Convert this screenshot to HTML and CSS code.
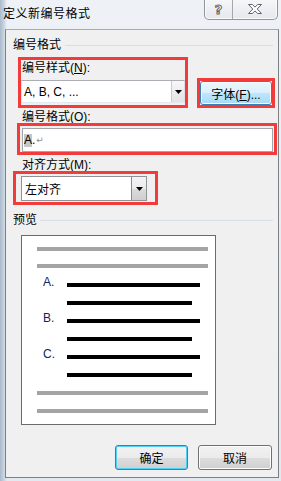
FILE: index.html
```html
<!DOCTYPE html>
<html>
  <head>
    <meta charset="utf-8">
    <link rel="stylesheet" href="styles.css">
  </head>
  <body>
    <div class="titlebar">
      <span class="title">定义新编号格式</span>
      <div class="caption-buttons">
        <div class="cap-btn cap-help"><span>?</span></div>
        <div class="cap-btn cap-close">
          <svg width="14" height="10" viewBox="0 0 14 10">
            <path d="M0.5,0.5 H4.3 L7,3.1 L9.7,0.5 H13.5 L9.2,5 L13.5,9.5 H9.7 L7,6.9 L4.3,9.5 H0.5 L4.8,5 Z" fill="#fff" stroke="#5f646a" stroke-width="1"/>
          </svg>
        </div>
      </div>
    </div>

    <div class="client">
      <div class="group-head">
        <span>编号格式</span>
        <i class="rule"></i>
      </div>

      <div class="row-style">
        <div class="mark mark-style">
          <label class="field-label">编号样式(<u>N</u>):</label>
          <div class="combo combo-style">
            <span class="combo-text">A, B, C, ...</span>
            <span class="combo-drop">
              <svg width="7" height="4" viewBox="0 0 7 4"><path d="M0,0 H7 L3.5,4 Z" fill="#000"/></svg>
            </span>
          </div>
        </div>
        <div class="mark mark-font">
          <button type="button" class="btn btn-hot">字体(<u>F</u>)...</button>
        </div>
      </div>

      <label class="field-label label-format">编号格式(O):</label>
      <div class="mark mark-format">
        <div class="textbox"><span class="sel">A</span>.<span class="para">↵</span></div>
      </div>

      <label class="field-label label-align">对齐方式(M):</label>
      <div class="mark mark-align">
        <div class="combo combo-align">
          <span class="combo-text">左对齐</span>
          <span class="combo-drop drop-btn">
            <svg width="7" height="4" viewBox="0 0 7 4"><path d="M0,0 H7 L3.5,4 Z" fill="#000"/></svg>
          </span>
        </div>
      </div>

      <div class="group-head head-preview">
        <span>预览</span>
        <i class="rule"></i>
      </div>

      <div class="preview">
        <div class="gray"></div>
        <div class="gray gray-second"></div>
        <div class="items">
          <div class="item"><span class="num">A.</span><i class="bar"></i></div>
          <div class="item"><span class="num"></span><i class="bar short"></i></div>
          <div class="item"><span class="num">B.</span><i class="bar"></i></div>
          <div class="item"><span class="num"></span><i class="bar short"></i></div>
          <div class="item"><span class="num">C.</span><i class="bar"></i></div>
          <div class="item"><span class="num"></span><i class="bar short"></i></div>
        </div>
        <div class="gray gray-after"></div>
        <div class="gray gray-after"></div>
      </div>

      <div class="actions">
        <button type="button" class="btn btn-default btn-ok">确定</button>
        <button type="button" class="btn btn-cancel">取消</button>
      </div>
    </div>
  </body>
</html>
```

FILE: styles.css
```css
body {
  margin: 0;
  width: 281px;
  height: 481px;
  overflow: hidden;
  font-family: "Liberation Sans", "Noto Sans CJK SC", sans-serif;
  font-size: 12px;
  color: #000;
  background:
    linear-gradient(to right, #a9bacb 0, #c9d5e1 4px, rgba(233, 238, 244, 0) 7px),
    linear-gradient(#eef1f5, #e2e8ef);
}

/* title bar */
.titlebar {
  display: flex;
  align-items: flex-start;
  height: 29px;
}

.title {
  margin: 7px 0 0 3px;
  line-height: 14px;
  letter-spacing: 0.5px;
}

.caption-buttons {
  display: flex;
  margin-left: auto;
  margin-right: 3px;
  margin-top: -1px;
  height: 20px;
  border: 1px solid #8e949b;
  border-top: none;
  border-radius: 0 0 5px 5px;
  overflow: hidden;
  background: linear-gradient(#f6f7f9, #e4e8ed);
  box-shadow: inset 0 0 0 1px rgba(255, 255, 255, 0.8);
}

.cap-btn {
  display: flex;
  align-items: center;
  justify-content: center;
}

.cap-help {
  width: 27px;
  border-right: 1px solid #a3a8ae;
}

.cap-help span {
  font-family: "DejaVu Sans", sans-serif;
  font-weight: bold;
  font-size: 13px;
  line-height: 13px;
  color: #fff;
  -webkit-text-stroke: 1px #5f646a;
}

.cap-close {
  width: 44px;
}

/* client area */
.client {
  display: flex;
  flex-direction: column;
  box-sizing: border-box;
  height: 449px;
  margin: 0 2px 0 5px;
  border: 1px solid #7b8085;
  border-top-color: #a6abb0;
  background: #f0f0f0;
}

.group-head {
  display: flex;
  align-items: center;
  margin: 9px 5px 0 7px;
  line-height: 12px;
}

.rule {
  flex: 1;
  height: 1px;
  margin-left: 4px;
  background: #d5dfe5;
}

.head-preview .rule {
  margin-left: 3px;
}

.field-label {
  display: block;
  line-height: 12px;
}

.mark {
  box-sizing: border-box;
  border: 3px solid #f23c3c;
}

.row-style {
  display: flex;
  align-items: flex-end;
  gap: 9px;
  margin: 6px 0 0 12px;
}

.mark-style {
  width: 170px;
  padding: 2px 0;
}

.mark-style .field-label {
  padding-left: 1px;
}

.mark-font {
  width: 78px;
  height: 30px;
}

.combo {
  display: flex;
  box-sizing: border-box;
  border: 1px solid #abadb3;
  border-left-color: #e2e3ea;
  border-right-color: #dbdfe6;
  border-bottom-color: #e3e9ef;
  background: #fff;
}

.combo-style {
  height: 23px;
  margin-top: 6px;
}

.combo-text {
  flex: 1;
  display: flex;
  align-items: center;
  padding-left: 2px;
}

.combo-drop {
  display: flex;
  align-items: center;
  justify-content: center;
  width: 12px;
  border-left: 1px solid #c9cbd0;
  background: linear-gradient(#f7f7f7, #e3e3e3);
}

.label-format {
  margin: 3px 0 0 16px;
}

.mark-format {
  width: 260px;
  height: 32px;
  margin-left: 11px;
  padding: 2px 0 0 2px;
}

.textbox {
  display: flex;
  align-items: center;
  box-sizing: border-box;
  width: 251px;
  height: 24px;
  padding-left: 1px;
  border: 1px solid #a3a5ab;
  background: #fff;
}

.sel {
  line-height: 13px;
  background: #c6c6c6;
}

.para {
  margin-left: 1px;
  font-family: "DejaVu Sans", sans-serif;
  font-size: 9px;
  color: #8e8e8e;
}

.label-align {
  margin: 4px 0 0 16px;
}

.mark-align {
  width: 145px;
  height: 34px;
  margin-left: 7px;
  padding: 2px 0 0 5px;
}

.combo-align {
  width: 126px;
  height: 25px;
  border-color: #8f9297;
}

.combo-align .combo-text {
  padding-left: 3px;
}

.drop-btn {
  width: 14px;
  margin: 0;
  border-left: 1px solid #8a8a8a;
  background: linear-gradient(#f4f4f4 0%, #ebebeb 50%, #dcdcdc 51%, #cfcfcf 100%);
}

/* preview */
.preview {
  box-sizing: border-box;
  width: 195px;
  height: 190px;
  margin: 9px 0 0 15px;
  padding-top: 11px;
  border: 1px solid #6b6b6b;
  background: #fff;
}

.gray {
  width: 171px;
  height: 4px;
  margin-left: 15px;
  background: #a4a4a4;
}

.gray-second {
  margin-top: 13px;
}

.gray-after {
  margin-top: 14px;
}

.items {
  margin-top: 1px;
}

.item {
  display: flex;
  align-items: flex-end;
  height: 18px;
}

.num {
  width: 24px;
  margin-left: 21px;
  margin-bottom: -1px;
  line-height: 12px;
  color: #0f2560;
}

.bar {
  width: 133px;
  height: 4px;
  background: #000;
}

.bar.short {
  width: 125px;
}

/* buttons */
.btn {
  box-sizing: border-box;
  height: 25px;
  padding: 0;
  font-family: inherit;
  font-size: 12px;
  color: #000;
  border: 1px solid #707070;
  border-radius: 3px;
  background: linear-gradient(#f2f2f2 0%, #ebebeb 50%, #dddddd 51%, #cfcfcf 100%);
  box-shadow: inset 0 0 0 1px #fcfcfc;
}

.btn-hot {
  width: 100%;
  height: 100%;
  border-color: #3c7fb1;
  background: linear-gradient(#eaf6fd 0%, #d9f0fc 50%, #bee6fd 51%, #a7d9f5 100%);
}

.btn-default {
  border-color: #3c7fb1;
  box-shadow: inset 0 0 0 1px #4fd0f7;
}

.actions {
  display: flex;
  justify-content: flex-end;
  gap: 10px;
  margin: 20px 6px 0 0;
}

.btn-ok {
  width: 73px;
}

.btn-cancel {
  width: 74px;
}
```
